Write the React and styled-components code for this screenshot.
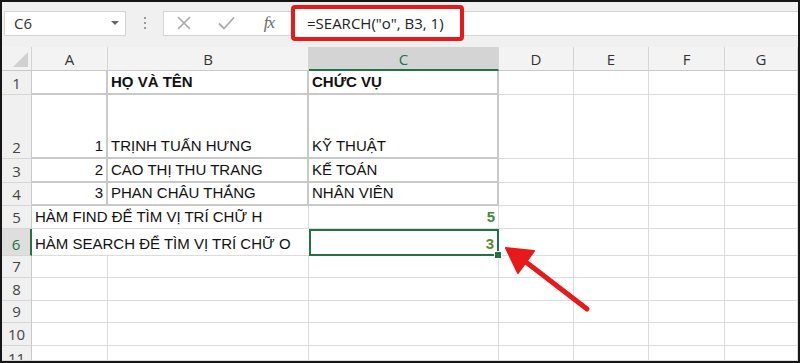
import React from "react";
import styled, { createGlobalStyle } from "styled-components";

const GlobalStyle = createGlobalStyle`
  html, body {
    margin: 0;
    padding: 0;
    background: #fff;
  }
  * { box-sizing: border-box; }
`;

const Frame = styled.div`
  width: 800px;
  height: 363px;
  border: 2px solid #161616;
  background: #f1f1f1;
  display: flex;
  flex-direction: column;
  overflow: hidden;
  position: relative;
`;

const Toolbar = styled.div`
  height: 45px;
  flex-shrink: 0;
  display: flex;
  align-items: center;
  padding: 0 0 3px 2px;
  background: #f0f0f0;
`;

const NameBox = styled.div`
  width: 122px;
  height: 25px;
  background: #fff;
  border: 1px solid #d4d4d4;
  display: flex;
  align-items: center;
  justify-content: space-between;
  padding: 0 6px 0 9px;
  font-family: "Open Sans", "Noto Sans", sans-serif;
  font-size: 15px;
  color: #333;
`;

const Caret = styled.span`
  width: 0;
  height: 0;
  border-left: 4px solid transparent;
  border-right: 4px solid transparent;
  border-top: 4px solid #666;
`;

const Dots = styled.div`
  width: 37px;
  display: flex;
  flex-direction: column;
  align-items: center;
  gap: 3px;
  span {
    width: 2px;
    height: 2px;
    background: #9a9a9a;
  }
`;

const FormulaBox = styled.div`
  flex: 1;
  height: 25px;
  background: #fff;
  border: 1px solid #d4d4d4;
  border-right: none;
  display: flex;
  align-items: center;
`;

const ToolBtn = styled.div`
  width: ${(p) => p.w}px;
  display: flex;
  justify-content: center;
  align-items: center;
  color: #a8a8a8;
`;

const Fx = styled.span`
  font-family: "Liberation Serif", serif;
  font-style: italic;
  font-size: 17px;
  color: #6a6a6a;
  letter-spacing: -1px;
`;

const Highlight = styled.div`
  height: 36px;
  margin-left: 1px;
  padding: 0 16px 0 12px;
  border: 4px solid #e8191a;
  border-radius: 4px;
  display: flex;
  align-items: center;
  font-family: "Open Sans", "Noto Sans", sans-serif;
  font-size: 15px;
  color: #222;
  white-space: nowrap;
  background: #fff;
`;

const Sheet = styled.div`
  flex: 1;
  min-height: 0;
  overflow: hidden;
  display: grid;
  grid-template-columns: 30px 76px 201px 190px 75px 75px 76px 1fr;
  grid-template-rows: 24px 24px 64px 24px 23px 23px 27px 22px 23px 22px 23px minmax(0, 1fr);
  background: #fff;
  position: relative;
`;

const Corner = styled.div`
  background: #f2f2f2;
  border-right: 1px solid #d4d4d4;
  border-bottom: 1px solid #c8c8c8;
  position: relative;
  &::after {
    content: "";
    position: absolute;
    right: 3px;
    bottom: 3px;
    border-left: 15px solid transparent;
    border-bottom: 15px solid #d0d0d0;
  }
`;

const ColHead = styled.div`
  background: ${(p) => (p.active ? "#d4d4d4" : "#f3f3f3")};
  color: ${(p) => (p.active ? "#217346" : "#333")};
  border-right: 1px solid #d6d6d6;
  border-bottom: ${(p) => (p.active ? "2px solid #217346" : "1px solid #c8c8c8")};
  display: flex;
  align-items: center;
  justify-content: center;
  font-family: "Open Sans", "Noto Sans", sans-serif;
  font-size: 15px;
  padding-top: 1px;
`;

const RowHead = styled.div`
  background: ${(p) => (p.active ? "#dedede" : "#f0f0f0")};
  color: ${(p) => (p.active ? "#217346" : "#444")};
  border-right: ${(p) => (p.active ? "2px solid #217346" : "1px solid #c8c8c8")};
  border-bottom: 1px solid #d6d6d6;
  display: flex;
  align-items: ${(p) => (p.cut ? "flex-start" : "flex-end")};
  justify-content: center;
  font-family: "Open Sans", "Noto Sans", sans-serif;
  font-size: 15px;
  line-height: 21px;
  padding-top: ${(p) => (p.cut ? "2px" : "0")};
  overflow: hidden;
  min-height: 0;
`;

const Cell = styled.div`
  grid-column: ${(p) => (p.span ? `span ${p.span}` : "auto")};
  border-right: ${(p) => (p.boxed ? "2px solid #c9c9c9" : p.noRight ? "none" : "1px solid #dcdcdc")};
  border-bottom: ${(p) => (p.boxed ? "2px solid #c9c9c9" : "1px solid #dcdcdc")};
  display: flex;
  align-items: flex-end;
  justify-content: ${(p) => (p.right ? "flex-end" : "flex-start")};
  padding: 0 3px 1px 3px;
  font-family: "Liberation Sans", Arial, sans-serif;
  font-size: 15px;
  line-height: 20px;
  font-weight: ${(p) => (p.bold ? 700 : 400)};
  color: ${(p) => p.color || "#111"};
  white-space: nowrap;
  overflow: visible;
  min-height: 0;
`;

const Selected = styled(Cell)`
  border: 2px solid #217346;
  position: relative;
  padding-bottom: 0;
  &::after {
    content: "";
    position: absolute;
    right: -5px;
    bottom: -5px;
    width: 6px;
    height: 6px;
    background: #217346;
    border: 1px solid #fff;
  }
`;

const Arrow = styled.svg`
  position: absolute;
  left: 0;
  top: 0;
  pointer-events: none;
`;

const cols = ["A", "B", "C", "D", "E", "F", "G"];

const table = [
  ["", "HỌ VÀ TÊN", "CHỨC VỤ"],
  ["1", "TRỊNH TUẤN HƯNG", "KỸ THUẬT"],
  ["2", "CAO THỊ THU TRANG", "KẾ TOÁN"],
  ["3", "PHAN CHÂU THẮNG", "NHÂN VIÊN"],
];

const Empty = ({ n }) =>
  Array.from({ length: n }).map((_, i) => <Cell key={"e" + i} />);

export default function App() {
  return (
    <>
      <GlobalStyle />
      <Frame>
        <Toolbar>
          <NameBox>
            C6
            <Caret />
          </NameBox>
          <Dots>
            <span />
            <span />
            <span />
          </Dots>
          <FormulaBox>
            <ToolBtn w={40}>
              <svg width="14" height="14" viewBox="0 0 14 14">
                <path d="M1 1L13 13M13 1L1 13" stroke="#a9a9a9" strokeWidth="1.6" />
              </svg>
            </ToolBtn>
            <ToolBtn w={44}>
              <svg width="17" height="14" viewBox="0 0 17 14">
                <path d="M1 7.5L6 12.5L16 1.5" stroke="#a9a9a9" strokeWidth="1.8" fill="none" />
              </svg>
            </ToolBtn>
            <ToolBtn w={42}>
              <Fx>fx</Fx>
            </ToolBtn>
            <Highlight>=SEARCH("o", B3, 1)</Highlight>
          </FormulaBox>
        </Toolbar>

        <Sheet>
          <Corner />
          {cols.map((c) => (
            <ColHead key={c} active={c === "C"}>
              {c}
            </ColHead>
          ))}

          {table.map((row, i) => (
            <React.Fragment key={i}>
              <RowHead>{i + 1}</RowHead>
              <Cell boxed right>{row[0]}</Cell>
              <Cell boxed bold={i === 0}>{row[1]}</Cell>
              <Cell boxed bold={i === 0}>{row[2]}</Cell>
              <Empty n={4} />
            </React.Fragment>
          ))}

          <RowHead>5</RowHead>
          <Cell span={2}>HÀM FIND ĐỂ TÌM VỊ TRÍ CHỮ H</Cell>
          <Cell right bold color="#3c8d3c">5</Cell>
          <Empty n={4} />

          <RowHead active>6</RowHead>
          <Cell span={2} noRight>HÀM SEARCH ĐỂ TÌM VỊ TRÍ CHỮ O</Cell>
          <Selected right bold color="#5d8a2f">3</Selected>
          <Empty n={4} />

          {[7, 8, 9, 10, 11].map((r) => (
            <React.Fragment key={r}>
              <RowHead cut={r === 11}>{r}</RowHead>
              <Empty n={7} />
            </React.Fragment>
          ))}

          <Arrow width="796" height="314" viewBox="0 0 796 314">
            <line x1="585" y1="262" x2="520" y2="212" stroke="#e8191a" strokeWidth="5" strokeLinecap="round" />
            <polygon points="504,201 532,204 516,226" fill="#e8191a" stroke="#e8191a" strokeWidth="2" strokeLinejoin="round" />
          </Arrow>
        </Sheet>
      </Frame>
    </>
  );
}
